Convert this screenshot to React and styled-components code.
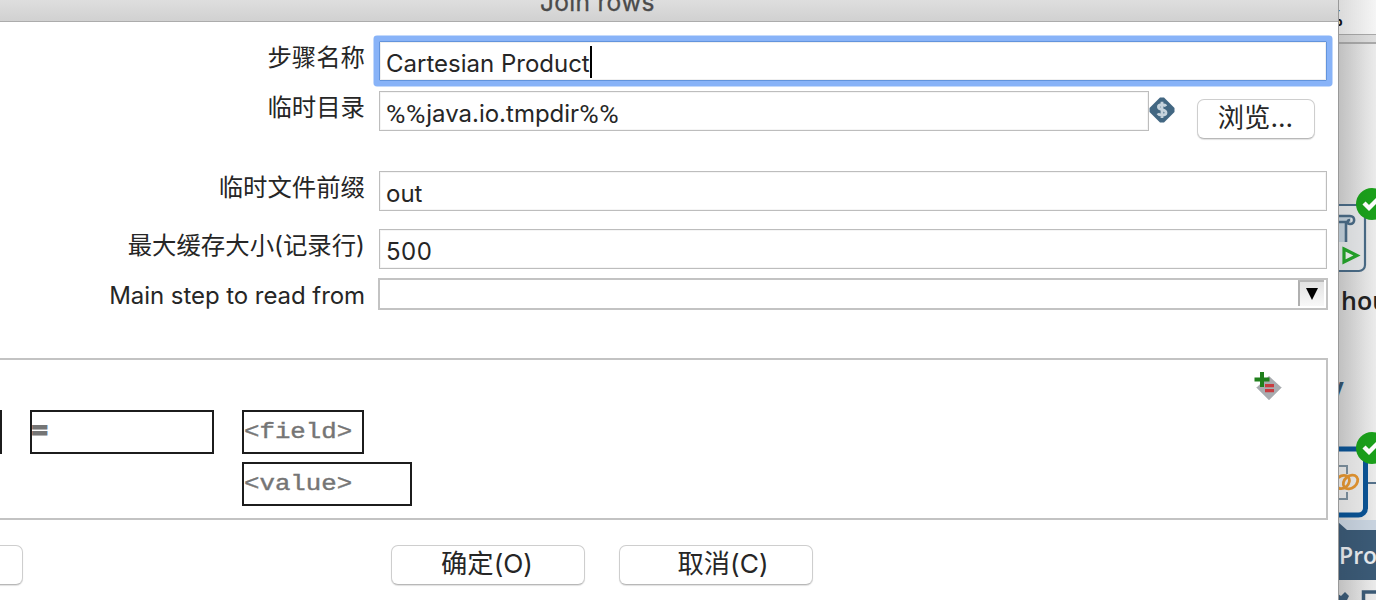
import React, { useState } from 'react'
import styled, { createGlobalStyle } from 'styled-components'


const GlobalStyle = createGlobalStyle`
* {
box-sizing: border-box;
}
body {
margin: 0;
overflow: hidden;
background: #ececec;
font-family: Inter, "Noto Sans CJK SC", sans-serif;
color: #262626;
}
`
const Page = styled.div`
display: flex;
width: 1376px;
height: 600px;
overflow: hidden;
`
const Dialog = styled.div`
width: 1338px;
flex: none;
display: flex;
flex-direction: column;
background: #fff;
`
const TitleBar = styled.div`
height: 22px;
padding-left: 540px;
overflow: hidden;
background: linear-gradient(#dedede, #d1d1d1);
border-bottom: 1px solid #acacac;
`
const Title = styled.div`
margin-top: -13px;
font-size: 24.5px;
line-height: 31px;
letter-spacing: 0.3px;
color: #4b4b4b;
-webkit-text-stroke: 0.3px #4b4b4b;
white-space: nowrap;
`
const Form = styled.div`
padding-top: 19px;
display: flex;
flex-direction: column;
`
const Row = styled.div`
display: flex;
align-items: flex-start;
height: ${props => props.height || 40}px;
margin-bottom: ${props => props.gap}px;
`
const Label = styled.label`
width: 365px;
flex: none;
margin-right: ${props => props.gap || 14}px;
margin-top: ${props => props.top}px;
text-align: right;
font-size: ${props => props.size || 24.4}px;
line-height: 34px;
letter-spacing: ${props => props.spacing || 0}px;
white-space: nowrap;
`
const Field = styled.div`
width: ${props => props.width || 948}px;
height: 40px;
flex: none;
display: flex;
align-items: center;
padding: 5px 0 0 6px;
background: #fff;
border: 1px solid ${props => props.focused ? '#6394dc' : '#bdbdbd'};
border-radius: ${props => props.focused ? '1px' : '0'};
box-shadow: ${props => props.focused ? '0 0 0 5.5px #88b3f8, inset 0 0 0 1px #f0f0f0' : 'inset 0 0 0 1px #f5f5f5'};
font-size: 24px;
line-height: 30px;
letter-spacing: ${props => props.spacing || 0}px;
white-space: nowrap;
`
const Percent = styled.span`
font-family: Roboto, sans-serif;
font-size: 26.5px;
letter-spacing: 0.7px;
`
const Caret = styled.span`
width: 2px;
height: 32px;
margin-top: -4px;
background: #000;
`
const VariableMark = styled.svg`
width: 26px;
height: 26px;
flex: none;
margin-top: 6px;
`
const Button = styled.button`
width: ${props => props.width}px;
height: 40px;
flex: none;
padding: 0 ${props => props.shift < 0 ? -props.shift : 0}px 2px ${props => props.shift > 0 ? props.shift : 0}px;
margin: ${props => props.margin || 0};
border: 1px solid #cecece;
border-bottom-color: #b8b8b8;
border-radius: 7px;
background: #fff;
box-shadow: 0 1px 1px rgba(0, 0, 0, 0.12);
font-family: inherit;
font-size: 26.3px;
line-height: 34px;
color: #262626;
white-space: nowrap;
`
const Combo = styled.div`
width: 950px;
height: 32px;
flex: none;
display: flex;
justify-content: flex-end;
border: 2px solid #c3c3c3;
padding-right: 2px;
`
const ComboArrow = styled.div`
width: 26px;
height: 26px;
border-left: 2px solid #b0b0b0;
border-top: 2px solid #b8b8b8;
background: linear-gradient(#e2e2e2, #f8f8f8);
`
const Condition = styled.div`
width: 1330px;
height: 162px;
margin: 0 0 0 -2px;
display: flex;
justify-content: space-between;
border: 2px solid #c3c3c3;
`
const ConditionGrid = styled.div`
display: grid;
grid-template-columns: 2px 184px 170px;
grid-template-rows: 44px 44px;
column-gap: 28px;
row-gap: 8px;
padding-top: 50px;
`
const Cell = styled.div`
width: ${props => props.width}px;
height: 44px;
grid-column: ${props => props.column};
justify-self: ${props => props.column === 1 ? 'end' : 'start'};
border: 2px solid #1c1c1c;
`
const CellText = styled.span`
display: inline-block;
transform: scaleX(1.17);
transform-origin: 0 0;
font-family: "Liberation Mono", monospace;
font-size: 22px;
font-weight: ${props => props.bold ? 700 : 400};
line-height: 38px;
padding-top: 2px;
color: #757575;
-webkit-text-stroke: ${props => props.bold ? 2 : 0.4}px #757575;
white-space: nowrap;
`
const AddMark = styled.svg`
width: 30px;
height: 32px;
margin: 10px 44px 0 0;
`
const Footer = styled.div`
display: flex;
padding-top: 25px;
`
const Canvas = styled.div`
position: relative;
width: 38px;
height: 600px;
flex: none;
overflow: hidden;
background: linear-gradient(90deg, #d0d0d0, #e6e6e6 75%, #ebebeb);
`
const Toolbar = styled.div`
height: 44px;
background: linear-gradient(90deg, #ededed, #f5f5f5);
border-bottom: 2px solid #a9a9a9;
`
const ZoomLevel = styled.div`
height: 35px;
border-bottom: 1px solid #a8a8a8;
padding-top: 4px;
font-size: 21px;
font-weight: 600;
line-height: 30px;
color: #111;
text-indent: -15px;
`
const ToolbarEdge = styled.div`
height: 7px;
background: linear-gradient(90deg, #d6d6d6, #dedede);
`
const Nodes = styled.svg`
position: absolute;
left: 0;
top: 0;
`
const NodeName = styled.div`
position: absolute;
left: ${props => props.left}px;
top: ${props => props.top}px;
font-family: "Open Sans", sans-serif;
font-size: ${props => props.size}px;
font-weight: ${props => props.weight || 600};
line-height: 30px;
color: ${props => props.color};
white-space: nowrap;
`
const Shade = styled.div`
position: absolute;
left: 0;
top: 0;
width: 38px;
height: 600px;
border-left: 1px solid #999;
background: linear-gradient(90deg, rgba(0, 0, 0, 0.08), rgba(0, 0, 0, 0));
`


const Check = ({ x, y }) => (
    <g transform={`translate(${x} ${y})`}>
        <circle r="16" fill="#1ba01b" />
        <path d="M-8 -1 L-3 4 L7 -6" fill="none" stroke="#fff" strokeWidth="4.4" />
    </g>
)

const App = () => {
    const [focus, setFocus] = useState('name')
    return (
        <Page>
            <GlobalStyle />
            <Dialog>
                <TitleBar><Title>Join rows</Title></TitleBar>
                <Form>
                    <Row gap={10}>
                        <Label top={-1}>步骤名称</Label>
                        <Field focused={focus === 'name'} spacing={0} onClick={() => setFocus('name')}>
                            Cartesian Product{focus === 'name' && <Caret />}
                        </Field>
                    </Row>
                    <Row gap={40}>
                        <Label top={-1}>临时目录</Label>
                        <Field width={770} spacing={0} focused={focus === 'dir'} onClick={() => setFocus('dir')}>
                            <Percent>%%</Percent>java.io.tmpdir<Percent>%%</Percent>
                        </Field>
                        <VariableMark viewBox="0 0 26 26">
                            <path d="M11 0.5 h4 L25.5 11 v4 L15 25.5 h-4 L0.5 15 v-4Z" fill="#426782" />
                            <path d="M17 9.2 C16 7.5 9.4 6.8 9.4 10 C9.4 13.5 17 11.8 17 15.8 C17 19.2 10 18.6 8.8 16.4 M13 4.8 V21" fill="none" stroke="#c6d3dc" strokeWidth="2.8" />
                        </VariableMark>
                        <Button width={118} margin="8px 0 0 22px" shift={-1}>浏览...</Button>
                    </Row>
                    <Row gap={18}>
                        <Label top={-1}>临时文件前缀</Label>
                        <Field focused={focus === 'prefix'} onClick={() => setFocus('prefix')}>out</Field>
                    </Row>
                    <Row gap={9}>
                        <Label top={-1}>最大缓存大小(记录行)</Label>
                        <Field focused={focus === 'cache'} spacing={0.5} onClick={() => setFocus('cache')}>500</Field>
                    </Row>
                    <Row gap={48} height={32}>
                        <Label top={1} gap={13} size={24} spacing={-0.06}>Main step to read from</Label>
                        <Combo>
                            <ComboArrow>
                                <svg width="24" height="24" viewBox="0 0 24 24" display="block">
                                    <path d="M6 6 H18 L12 18Z" fill="#000" />
                                </svg>
                            </ComboArrow>
                        </Combo>
                    </Row>
                </Form>
                <Condition>
                    <ConditionGrid>
                        <Cell column={1} width={60} />
                        <Cell column={2} width={184}><CellText bold>=</CellText></Cell>
                        <Cell column={3} width={122}><CellText>&lt;field&gt;</CellText></Cell>
                        <Cell column={3} width={170}><CellText>&lt;value&gt;</CellText></Cell>
                    </ConditionGrid>
                    <AddMark viewBox="0 0 30 32">
                        <path d="M17 6 L29.5 17.5 L17 30 L4.5 17.5Z" fill="#a8abaf" />
                        <path d="M4.5 17.5 L17 30 L29.5 17.5" fill="none" stroke="#c3c5c7" />
                        <path d="M13 15.7 H22 M13 20.7 H22" stroke="#c83c40" strokeWidth="3.2" />
                        <path d="M2.5 9.5 H17.5 M10 2 V17" stroke="#20801c" strokeWidth="4" />
                    </AddMark>
                </Condition>
                <Footer>
                    <Button width={60} margin="0 368px 0 -37px" />
                    <Button width={194} margin="0 34px 0 0" shift={-2}>确定(O)</Button>
                    <Button width={194} shift={14}>取消(C)</Button>
                </Footer>
            </Dialog>
            <Canvas>
                <Toolbar>
                    <ZoomLevel>%</ZoomLevel>
                    <ToolbarEdge />
                </Toolbar>
                <Nodes width="38" height="600" viewBox="0 0 38 600">
                    <rect x="-40" y="205" width="67" height="66" rx="6" fill="#e4e6e8" stroke="#4a6b86" strokeWidth="2.2" />
                    <path d="M0 216 H13 V222 H9 V242 H0Z" fill="#c2d0db" />
                    <path d="M0 216 H12 C17.5 216 17.5 224 12 224 C9 224 9 220 12 220 M0 222 H8 V242" fill="none" stroke="#4a6b86" strokeWidth="2.6" />
                    <path d="M6 249 L19 255.5 L6 262Z" fill="#eef3ee" stroke="#25a52a" strokeWidth="3.2" />
                    <Check x={34} y={204} />
                    <path d="M29 483 H38" stroke="#54718a" strokeWidth="2" />
                    <rect x="-40" y="449" width="67.5" height="66" rx="7" fill="#eaeaea" stroke="#0b5394" strokeWidth="5" />
                    <path d="M0 466 H9 V474 M9 492 V499 H0" fill="none" stroke="#7d909e" strokeWidth="2" />
                    <ellipse cx="4.5" cy="482" rx="7.5" ry="6" fill="none" stroke="#e39531" strokeWidth="2.8" transform="rotate(-40 4.5 482)" />
                    <ellipse cx="12.5" cy="482" rx="8" ry="6" fill="none" stroke="#e39531" strokeWidth="2.8" transform="rotate(-40 12.5 482)" />
                    <Check x={34} y={448} />
                    <rect x="0" y="520" width="38" height="12" fill="#c8d3df" />
                    <path d="M0 522 L9 530 H38 V580 H0Z" fill="#3b5a76" />
                    <path d="M0 594 l3 2 l4 -4 l4 4 l-2 4 H0Z" fill="#3b5a76" />
                    <path d="M25.5 602 V592 H40" fill="none" stroke="#3b5a76" strokeWidth="3.5" />
                </Nodes>
                <NodeName left={3} top={285} size={25} color="#222">hou</NodeName>
                <NodeName left={-8} top={371} size={24} color="#33536e" weight={700}>y</NodeName>
                <NodeName left={1} top={540} size={23} color="#e8ebee">Pro</NodeName>
                <Shade />
            </Canvas>
        </Page>
    )
}

export default App
